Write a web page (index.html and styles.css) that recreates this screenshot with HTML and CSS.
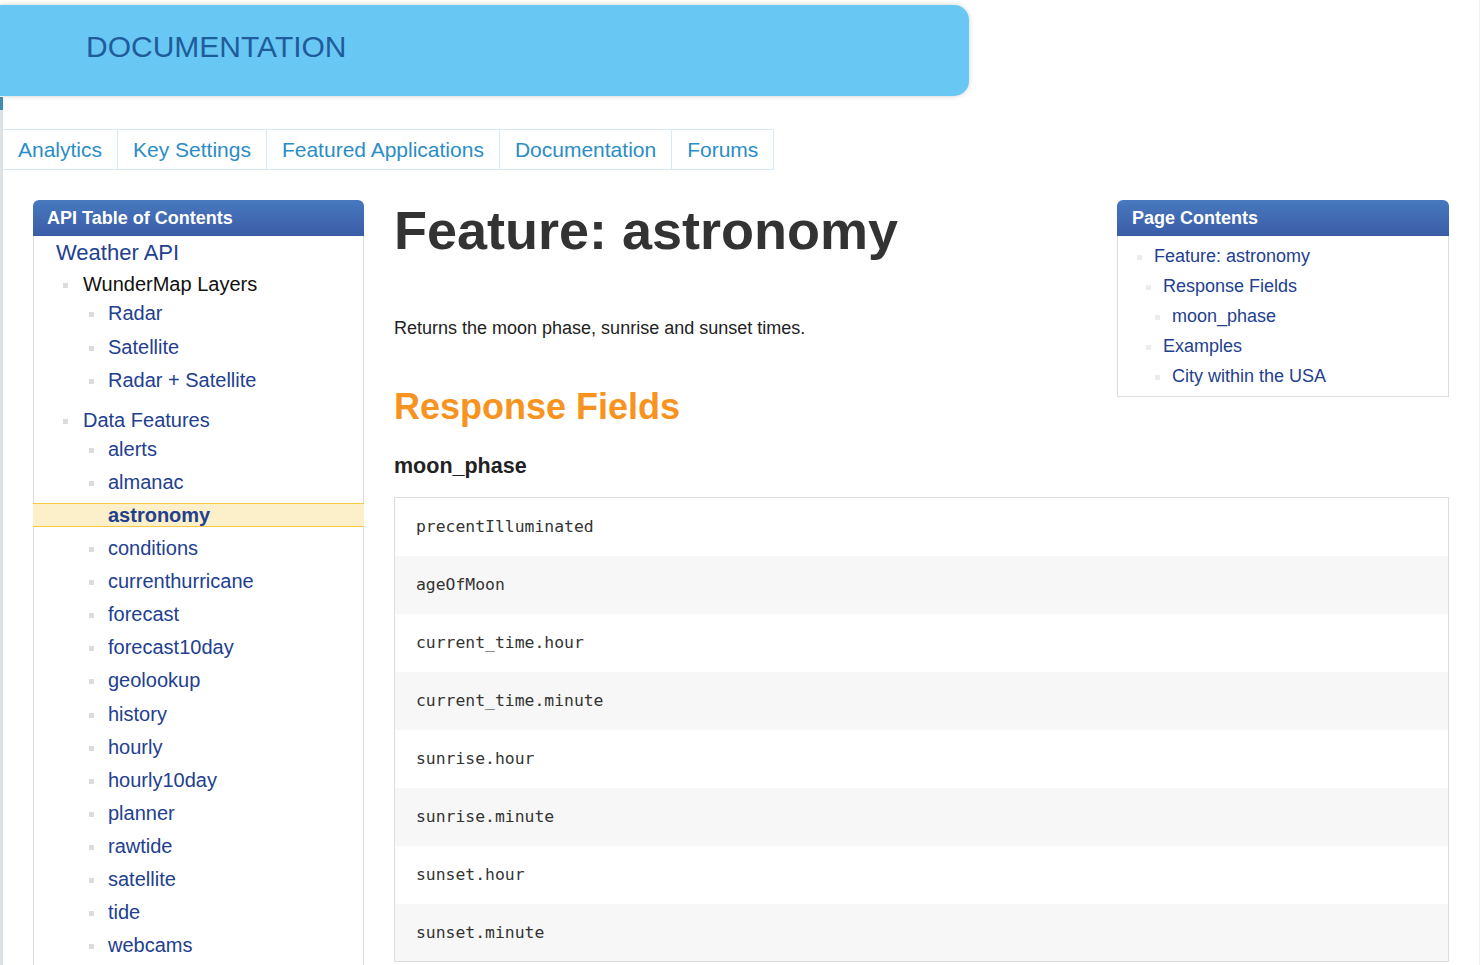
FILE: index.html
```html
<!DOCTYPE html>
<html lang="en">
<head>
<meta charset="utf-8">
<title>Feature: astronomy</title>
<link rel="stylesheet" href="styles.css">
</head>
<body>
<header class="banner"><h1 class="banner-title">DOCUMENTATION</h1></header>
<div class="page">
  <nav class="tabs">
    <a class="tab" href="#">Analytics</a>
    <a class="tab" href="#">Key Settings</a>
    <a class="tab" href="#">Featured Applications</a>
    <a class="tab" href="#">Documentation</a>
    <a class="tab" href="#">Forums</a>
  </nav>
  <div class="layout">
    <aside class="sidebar">
      <div class="panel-head">API Table of Contents</div>
      <div class="toc">
        <a class="toc-root" href="#">Weather API</a>
        <ul class="toc-l1">
          <li><span class="toc-group plain">WunderMap Layers</span>
            <ul class="toc-l2">
              <li><a href="#">Radar</a></li>
              <li class="gap"><a href="#">Satellite</a></li>
              <li><a href="#">Radar + Satellite</a></li>
            </ul>
          </li>
          <li><a class="toc-group" href="#">Data Features</a>
            <ul class="toc-l2">
              <li><a href="#">alerts</a></li>
              <li><a href="#">almanac</a></li>
              <li><a class="active" href="#">astronomy</a></li>
              <li><a href="#">conditions</a></li>
              <li><a href="#">currenthurricane</a></li>
              <li><a href="#">forecast</a></li>
              <li><a href="#">forecast10day</a></li>
              <li><a href="#">geolookup</a></li>
              <li class="gap"><a href="#">history</a></li>
              <li><a href="#">hourly</a></li>
              <li><a href="#">hourly10day</a></li>
              <li><a href="#">planner</a></li>
              <li><a href="#">rawtide</a></li>
              <li><a href="#">satellite</a></li>
              <li><a href="#">tide</a></li>
              <li><a href="#">webcams</a></li>
            </ul>
          </li>
        </ul>
      </div>
    </aside>
    <main class="main">
      <div class="contents">
        <div class="panel-head">Page Contents</div>
        <div class="contents-body">
          <ul class="pc-list">
            <li><a href="#">Feature: astronomy</a>
              <ul>
                <li><a href="#">Response Fields</a>
                  <ul><li><a href="#">moon_phase</a></li></ul>
                </li>
                <li><a href="#">Examples</a>
                  <ul><li><a href="#">City within the USA</a></li></ul>
                </li>
              </ul>
            </li>
          </ul>
        </div>
      </div>
      <h1 class="title">Feature: astronomy</h1>
      <p class="lead">Returns the moon phase, sunrise and sunset times.</p>
      <h2 class="section">Response Fields</h2>
      <h3 class="sub">moon_phase</h3>
      <table class="fields">
        <tr><td>precentIlluminated</td></tr>
        <tr><td>ageOfMoon</td></tr>
        <tr><td>current_time.hour</td></tr>
        <tr><td>current_time.minute</td></tr>
        <tr><td>sunrise.hour</td></tr>
        <tr><td>sunrise.minute</td></tr>
        <tr><td>sunset.hour</td></tr>
        <tr><td>sunset.minute</td></tr>
      </table>
    </main>
  </div>
</div>
</body>
</html>
```
FILE: styles.css
```css
* { box-sizing: border-box; }
html { overflow: hidden; background: #fff; }
body {
  margin: 0;
  font-family: "Liberation Sans", Arial, sans-serif;
  color: #222;
  border-right: 1px solid #f2f2f2;
  min-height: 965px;
}
a { text-decoration: none; }

.banner {
  margin-top: 5px;
  width: 969px;
  height: 91px;
  background: #68c8f3;
  border-radius: 0 15px 15px 0;
  box-shadow: 0 0 5px rgba(0, 0, 0, 0.2);
  padding: 25px 0 0 86px;
}
.banner-title {
  margin: 0;
  font-size: 30px;
  line-height: 34px;
  font-weight: normal;
  color: #1f5c9c;
}

.page {
  padding: 33px 30px 0 3px;
  background:
    linear-gradient(#3d8db5, #3d8db5) 0 1px / 3px 13px no-repeat,
    linear-gradient(#dce1e4, #dce1e4) 0 1px / 3px 100% no-repeat;
  min-height: 869px;
}

.tabs {
  display: flex;
  width: max-content;
  border-top: 1px solid #d6eaf5;
  border-bottom: 1px solid #d6eaf5;
}
.tab {
  padding: 8px 15px;
  font-size: 21px;
  line-height: 23px;
  color: #2b8dc5;
  border-right: 1px solid #d6eaf5;
}

.layout {
  display: flex;
  align-items: flex-start;
  gap: 30px;
  padding: 30px 0 0 30px;
}

.sidebar {
  width: 331px;
  flex: none;
}
.panel-head {
  height: 36px;
  padding-left: 14px;
  line-height: 36px;
  font-size: 18px;
  font-weight: bold;
  color: #fff;
  background: linear-gradient(#4879bf, #3a5ca6);
  border-radius: 6px 6px 0 0;
}
.toc {
  border: 1px solid #ddd;
  border-top: 0;
  padding: 2px 0 80px 22px;
}
.toc-root {
  display: block;
  font-size: 22px;
  line-height: 30px;
  color: #22408f;
}
.toc-l1 {
  list-style: none;
  margin: 1px 0 0;
  padding-left: 27px;
}
.toc-group {
  display: block;
  font-size: 20px;
  line-height: 30px;
  color: #22408f;
}
.toc-group.plain { color: #111; }
.toc-group::before,
.toc-l2 a::before {
  content: "";
  display: inline-block;
  width: 5px;
  height: 5px;
  background: #dcdcdc;
  vertical-align: middle;
}
.toc-group::before { margin-left: -20px; margin-right: 15px; }
.toc-l2 {
  list-style: none;
  margin: -2px 0 8px;
  padding-left: 25px;
}
.toc-l2 li { padding: 4px 0 5px; }
.toc-l2 li.gap { padding-top: 5px; }
.toc-l2 a {
  display: block;
  font-size: 20px;
  line-height: 22px;
  color: #22408f;
  border-top: 1px solid transparent;
  border-bottom: 1px solid transparent;
}
.toc-l2 a::before { margin-left: -19px; margin-right: 14px; }
.toc-l2 a.active {
  font-weight: bold;
  background: #fbf0c9;
  border-color: #f6c944;
  margin-left: -75px;
  margin-right: -1px;
  padding-left: 75px;
}
.toc-l2 a.active::before { display: none; }

.main {
  flex: 1;
  min-width: 0;
}
.contents {
  float: right;
  width: 332px;
  margin-left: 20px;
}
.contents .panel-head { padding-left: 15px; }
.contents-body {
  border: 1px solid #ddd;
  border-top: 0;
  padding: 5px 0 5px 36px;
}
.pc-list, .pc-list ul {
  list-style: none;
  margin: 0;
  padding: 0;
}
.pc-list ul { padding-left: 9px; }
.pc-list a {
  display: block;
  font-size: 18px;
  line-height: 30px;
  color: #22408f;
}
.pc-list a::before {
  content: "";
  display: inline-block;
  width: 5px;
  height: 5px;
  background: #ececec;
  vertical-align: middle;
  margin-left: -17px;
  margin-right: 12px;
}

.title {
  margin: 0;
  font-size: 54px;
  line-height: 60px;
  font-weight: bold;
  color: #333;
}
.lead {
  margin: 57px 0 0;
  font-size: 18px;
  line-height: 22px;
  color: #222;
}
.section {
  margin: 47px 0 0;
  font-size: 36px;
  line-height: 42px;
  font-weight: bold;
  color: #f7931e;
}
.sub {
  margin: 25px 0 0;
  font-size: 21.5px;
  line-height: 26px;
  font-weight: bold;
  color: #222;
}
.fields {
  clear: both;
  width: 100%;
  margin-top: 18px;
  border-collapse: collapse;
  border: 1px solid #ddd;
}
.fields td {
  height: 58px;
  padding: 0 21px;
  font-family: "DejaVu Sans Mono", monospace;
  font-size: 16.4px;
  color: #333;
  background: #fff;
}
.fields tr:nth-child(even) td { background: #f7f7f7; }
```
